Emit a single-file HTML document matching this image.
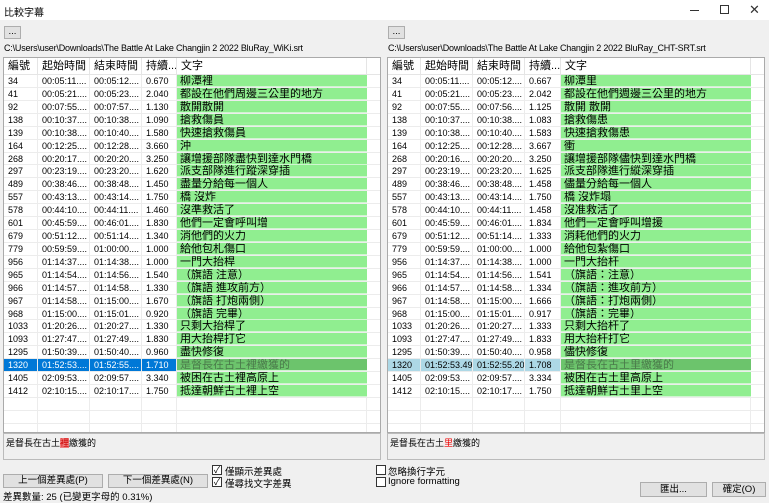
<!DOCTYPE html>
<html><head><meta charset="utf-8">
<style>
*{box-sizing:border-box;margin:0;padding:0}
body{width:769px;height:500px;background:#f0f0f0;font-family:"Liberation Sans","Noto Sans CJK TC",sans-serif;position:relative;overflow:hidden;color:#000}
.title{position:absolute;left:0;top:0;width:769px;height:20px;background:#fff;font-size:10px}
.title span{position:absolute;left:4px;top:4px}
.ab{position:absolute}
.btn{position:absolute;background:#e1e1e1;border:1px solid #adadad;font-size:9.5px;text-align:center}
.path{position:absolute;font-size:9px;top:43px;letter-spacing:-0.2px}
.tbl{position:absolute;top:57px;width:378px;height:376px;background:#fff;border:1px solid #aaa;overflow:hidden}
.row{position:absolute;left:0;height:12.92px;width:376px;font-size:9px;border-bottom:1px solid #ececec}
.row div{position:absolute;top:0;height:12px;line-height:12px;padding-left:4px;border-right:1px solid #ececec;white-space:nowrap;overflow:hidden}
.row .t{background:#90ee90;font-size:11px;padding-left:3px;border-right:none;border-bottom:1px solid #d0f5d0}
.hdr{position:absolute;left:0;top:0;height:17px;width:376px;font-size:11px;border-bottom:1px solid #e5e5e5}
.hdr div{position:absolute;top:0;height:17px;line-height:17px;padding-left:4px;border-right:1px solid #e5e5e5;white-space:nowrap;overflow:hidden}
.sel div{background:#0078d7;color:#fff}
.sel .t{background:#6cc46c;color:#4a7a4a}
.sel2 div{background:#add8e6}
.sel2 .t{background:#6cc46c;color:#4a7a4a}
.box{position:absolute;top:433px;height:27px;border:1px solid #bbb;background:#f0f0f0;font-size:9px;padding:2px 2px}
.cb{position:absolute;width:10px;height:10px;border:1px solid #333;background:#fff;font-size:9px;line-height:8px;text-align:center}
.lbl{position:absolute;font-size:9.5px}
</style></head><body>
<div class="title"><span>比較字幕</span>
<div class="ab" style="left:690px;top:10px;width:9px;height:1px;background:#333"></div>
<div class="ab" style="left:720px;top:5px;width:9px;height:9px;border:1px solid #333"></div>
<div class="ab" style="left:749px;top:2px;font-size:13px;color:#333">✕</div>
</div>

<div class="btn" style="left:4px;top:26px;width:17px;height:13px;line-height:9px">...</div>
<div class="path" style="left:4px">C:\Users\user\Downloads\The Battle At Lake Changjin 2 2022 BluRay_WiKi.srt</div>
<div class="btn" style="left:388px;top:26px;width:17px;height:13px;line-height:9px">...</div>
<div class="path" style="left:388px">C:\Users\user\Downloads\The Battle At Lake Changjin 2 2022 BluRay_CHT-SRT.srt</div>

<div class="tbl" style="left:3px" id="L">
<div class="hdr"><div style="left:0;width:34px">編號</div><div style="left:34px;width:52px">起始時間</div><div style="left:86px;width:52px">結束時間</div><div style="left:138px;width:35px">持續...</div><div style="left:173px;width:190px;border-right:1px solid #e5e5e5">文字</div></div>
</div>
<div class="tbl" style="left:387px" id="R">
<div class="hdr"><div style="left:0;width:33px">編號</div><div style="left:33px;width:52px">起始時間</div><div style="left:85px;width:52px">結束時間</div><div style="left:137px;width:36px">持續...</div><div style="left:173px;width:190px;border-right:1px solid #e5e5e5">文字</div></div>
</div>

<div class="box" style="left:3px;width:378px">是督長在古土<span style="background:#f08080;color:#c00">裡</span>繳獲的</div>
<div class="box" style="left:387px;width:378px">是督長在古土<span style="color:#e00">里</span>繳獲的</div>

<div class="cb" style="left:212px;top:465px">✓</div><div class="lbl" style="left:225px;top:464px">僅顯示差異處</div>
<div class="cb" style="left:212px;top:477px">✓</div><div class="lbl" style="left:225px;top:476px">僅尋找文字差異</div>
<div class="cb" style="left:376px;top:465px"></div><div class="lbl" style="left:388px;top:464px">忽略換行字元</div>
<div class="cb" style="left:376px;top:477px"></div><div class="lbl" style="left:388px;top:476px">Ignore formatting</div>

<div class="btn" style="left:3px;top:474px;width:100px;height:14px;line-height:12px">上一個差異處(P)</div>
<div class="btn" style="left:108px;top:474px;width:100px;height:14px;line-height:12px">下一個差異處(N)</div>
<div class="btn" style="left:640px;top:482px;width:67px;height:15px;line-height:13px">匯出...</div>
<div class="btn" style="left:712px;top:482px;width:54px;height:15px;line-height:13px">確定(O)</div>
<div class="lbl" style="left:3px;top:489px">差異數量: 25 (已變更字母的 0.31%)</div>

<script>
var L=[["34","00:05:11....","00:05:12....","0.670","柳潭裡"],["41","00:05:21....","00:05:23....","2.040","都設在他們周邊三公里的地方"],["92","00:07:55....","00:07:57....","1.130","散開散開"],["138","00:10:37....","00:10:38....","1.090","搶救傷員"],["139","00:10:38....","00:10:40....","1.580","快速搶救傷員"],["164","00:12:25....","00:12:28....","3.660","沖"],["268","00:20:17....","00:20:20....","3.250","讓增援部隊盡快到達水門橋"],["297","00:23:19....","00:23:20....","1.620","派支部隊進行蹤深穿插"],["489","00:38:46....","00:38:48....","1.450","盡量分給每一個人"],["557","00:43:13....","00:43:14....","1.750","橋 沒炸"],["578","00:44:10....","00:44:11....","1.460","沒準救活了"],["601","00:45:59....","00:46:01....","1.830","他們一定會呼叫增"],["679","00:51:12....","00:51:14....","1.340","消他們的火力"],["779","00:59:59....","01:00:00....","1.000","給他包札傷口"],["956","01:14:37....","01:14:38....","1.000","一門大抬桿"],["965","01:14:54....","01:14:56....","1.540","（旗語 注意）"],["966","01:14:57....","01:14:58....","1.330","（旗語 進攻前方）"],["967","01:14:58....","01:15:00....","1.670","（旗語 打炮兩側）"],["968","01:15:00....","01:15:01....","0.920","（旗語 完畢）"],["1033","01:20:26....","01:20:27....","1.330","只剩大抬桿了"],["1093","01:27:47....","01:27:49....","1.830","用大抬桿打它"],["1295","01:50:39....","01:50:40....","0.960","盡快修復"],["1320","01:52:53....","01:52:55....","1.710","是督長在古土裡繳獲的"],["1405","02:09:53....","02:09:57....","3.340","被困在古土裡高原上"],["1412","02:10:15....","02:10:17....","1.750","抵達朝鮮古土裡上空"]];
var R=[["34","00:05:11....","00:05:12....","0.667","柳潭里"],["41","00:05:21....","00:05:23....","2.042","都設在他們週邊三公里的地方"],["92","00:07:55....","00:07:56....","1.125","散開 散開"],["138","00:10:37....","00:10:38....","1.083","搶救傷患"],["139","00:10:38....","00:10:40....","1.583","快速搶救傷患"],["164","00:12:25....","00:12:28....","3.667","衝"],["268","00:20:16....","00:20:20....","3.250","讓增援部隊儘快到達水門橋"],["297","00:23:19....","00:23:20....","1.625","派支部隊進行縱深穿插"],["489","00:38:46....","00:38:48....","1.458","儘量分給每一個人"],["557","00:43:13....","00:43:14....","1.750","橋 沒炸塌"],["578","00:44:10....","00:44:11....","1.458","沒准救活了"],["601","00:45:59....","00:46:01....","1.834","他們一定會呼叫增援"],["679","00:51:12....","00:51:14....","1.333","消耗他們的火力"],["779","00:59:59....","01:00:00....","1.000","給他包紮傷口"],["956","01:14:37....","01:14:38....","1.000","一門大抬杆"],["965","01:14:54....","01:14:56....","1.541","（旗語：注意）"],["966","01:14:57....","01:14:58....","1.334","（旗語：進攻前方）"],["967","01:14:58....","01:15:00....","1.666","（旗語：打炮兩側）"],["968","01:15:00....","01:15:01....","0.917","（旗語：完畢）"],["1033","01:20:26....","01:20:27....","1.333","只剩大抬杆了"],["1093","01:27:47....","01:27:49....","1.833","用大抬杆打它"],["1295","01:50:39....","01:50:40....","0.958","儘快修復"],["1320","01:52:53.49","01:52:55.20","1.708","是督長在古土里繳獲的"],["1405","02:09:53....","02:09:57....","3.334","被困在古土里高原上"],["1412","02:10:15....","02:10:17....","1.750","抵達朝鮮古土里上空"]];
function build(id,data,cols,selc){var el=document.getElementById(id);for(var i=0;i<29;i++){var r=document.createElement('div');r.className='row';r.style.top=(17+i*12.92)+'px';var d=data[i];if(i==22)r.className+=' '+selc;var h='';for(var c=0;c<5;c++){var x=cols[c],w=cols[c+1]-cols[c];var txt=d?d[c]:'';var cls=(c==4&&d)?' class="t"':'';var br=(c==4&&!d)?'border-right:1px solid #ececec;':'';h+='<div'+cls+' style="left:'+x+'px;width:'+w+'px;'+br+'">'+txt+'</div>';}r.innerHTML=h;el.appendChild(r);}}
build('L',L,[0,34,86,138,173,363],'sel');
build('R',R,[0,33,85,137,173,363],'sel2');
</script>
</body></html>
